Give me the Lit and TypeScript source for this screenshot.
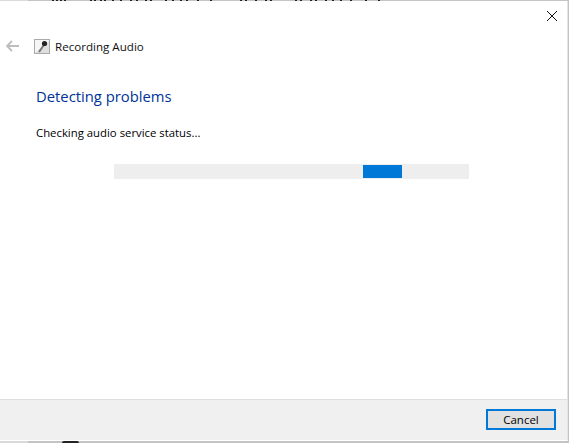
import { LitElement, html, css } from "lit";
import { customElement } from "lit/decorators.js";

const TOP_BITS = [52, 56, 60, 64, 90, 94, 100, 104, 112, 120, 130, 136, 145, 150, 165, 172, 180, 186, 197, 210, 240, 245, 255, 265, 270, 295, 300, 310, 315, 325, 332, 340, 350, 365, 378];

@customElement("app-root")
export class AppRoot extends LitElement {
  static styles = css`
    :host {
      display: block;
      width: 569px;
      height: 443px;
      background: #c4c4c4;
      overflow: hidden;
      font-family: "Open Sans", "Noto Sans", sans-serif;
      position: relative;
    }
    .bit {
      position: absolute;
      top: 0;
      width: 2px;
      height: 1px;
      background: #222;
    }
    .lighter {
      position: absolute;
      left: 0;
      width: 28px;
      height: 2px;
      background: #dadada;
    }
    .lighter.top { top: 0; height: 1px; }
    .lighter.bottom { bottom: 0; }
    .glyph {
      position: absolute;
      left: 62px;
      bottom: 0;
      width: 17px;
      height: 2px;
      background: #222;
      border-radius: 6px 6px 0 0;
    }
    .dialog {
      height: 440px;
      width: 568px;
      margin-top: 1px;
      background: #fff;
      display: flex;
      flex-direction: column;
      position: relative;
      box-sizing: border-box;
      border-right: 1px solid #e4e4e4;
      border-bottom: 1px solid #fff;
    }
    .close {
      display: flex;
      justify-content: flex-end;
      padding: 10px 10px 0 0;
      height: 27px;
      box-sizing: border-box;
    }
    .nav {
      display: flex;
      align-items: center;
      padding: 0 0 0 6px;
      height: 20px;
      margin-top: 8px;
    }
    .nav svg.back {
      margin-right: 15px;
    }
    .nav svg.icon {
      margin-right: 5px;
    }
    .title {
      font-size: 11.6px;
      color: #111;
    }
    .content {
      flex: 1;
      padding: 0 0 0 36px;
    }
    h1 {
      margin: 30px 0 0;
      font-weight: 400;
      font-size: 14.8px;
      line-height: 20px;
      color: #003399;
    }
    p {
      margin: 19px 0 0;
      font-size: 11.35px;
      line-height: 16px;
      color: #000;
    }
    .track {
      margin: 23px 0 0 78px;
      width: 355px;
      height: 15px;
      background: #eeeeee;
      display: flex;
      align-items: center;
      padding-left: 249px;
      box-sizing: border-box;
    }
    .fill {
      width: 39px;
      height: 13px;
      background: #0078d7;
    }
    .footer {
      height: 41px;
      background: #f0f0f0;
      border-top: 1px solid #dfdfdf;
      display: flex;
      justify-content: flex-end;
      align-items: flex-start;
      padding: 9px 11px 0 0;
      box-sizing: border-box;
    }
    button {
      width: 70px;
      height: 21px;
      box-sizing: border-box;
      border: 2px solid #0078d7;
      background: #e1e1e1;
      font: inherit;
      font-size: 11.5px;
      color: #000;
      padding: 0;
    }
  `;

  render() {
    return html`
      <div class="lighter top"></div>
      ${TOP_BITS.map((x) => html`<span class="bit" style="left:${x}px"></span>`)}
      <div class="dialog">
        <div class="close">
          <svg width="10" height="10" viewBox="0 0 10 10">
            <path d="M0 0L10 10M10 0L0 10" stroke="#111" stroke-width="1" fill="none" />
          </svg>
        </div>
        <div class="nav">
          <svg class="back" width="13" height="12" viewBox="0 0 13 12">
            <path d="M6 1L1 6L6 11M1 6H13" stroke="#bdbdbd" stroke-width="1.8" fill="none" />
          </svg>
          <svg class="icon" width="16" height="15" viewBox="0 0 16 15">
            <rect x="0.5" y="0.5" width="15" height="14" fill="#f6f6f6" stroke="#aaa" />
            <path d="M1 14L15 2V14Z" fill="#dedede" />
            <path d="M5 13L9.5 6.5" stroke="#777" stroke-width="2" />
            <circle cx="10.5" cy="4.5" r="2.6" fill="#222" />
          </svg>
          <span class="title">Recording Audio</span>
        </div>
        <div class="content">
          <h1>Detecting problems</h1>
          <p>Checking audio service status...</p>
          <div class="track"><div class="fill"></div></div>
        </div>
        <div class="footer"><button>Cancel</button></div>
      </div>
      <div class="lighter bottom"></div>
      <div class="glyph"></div>
    `;
  }
}
